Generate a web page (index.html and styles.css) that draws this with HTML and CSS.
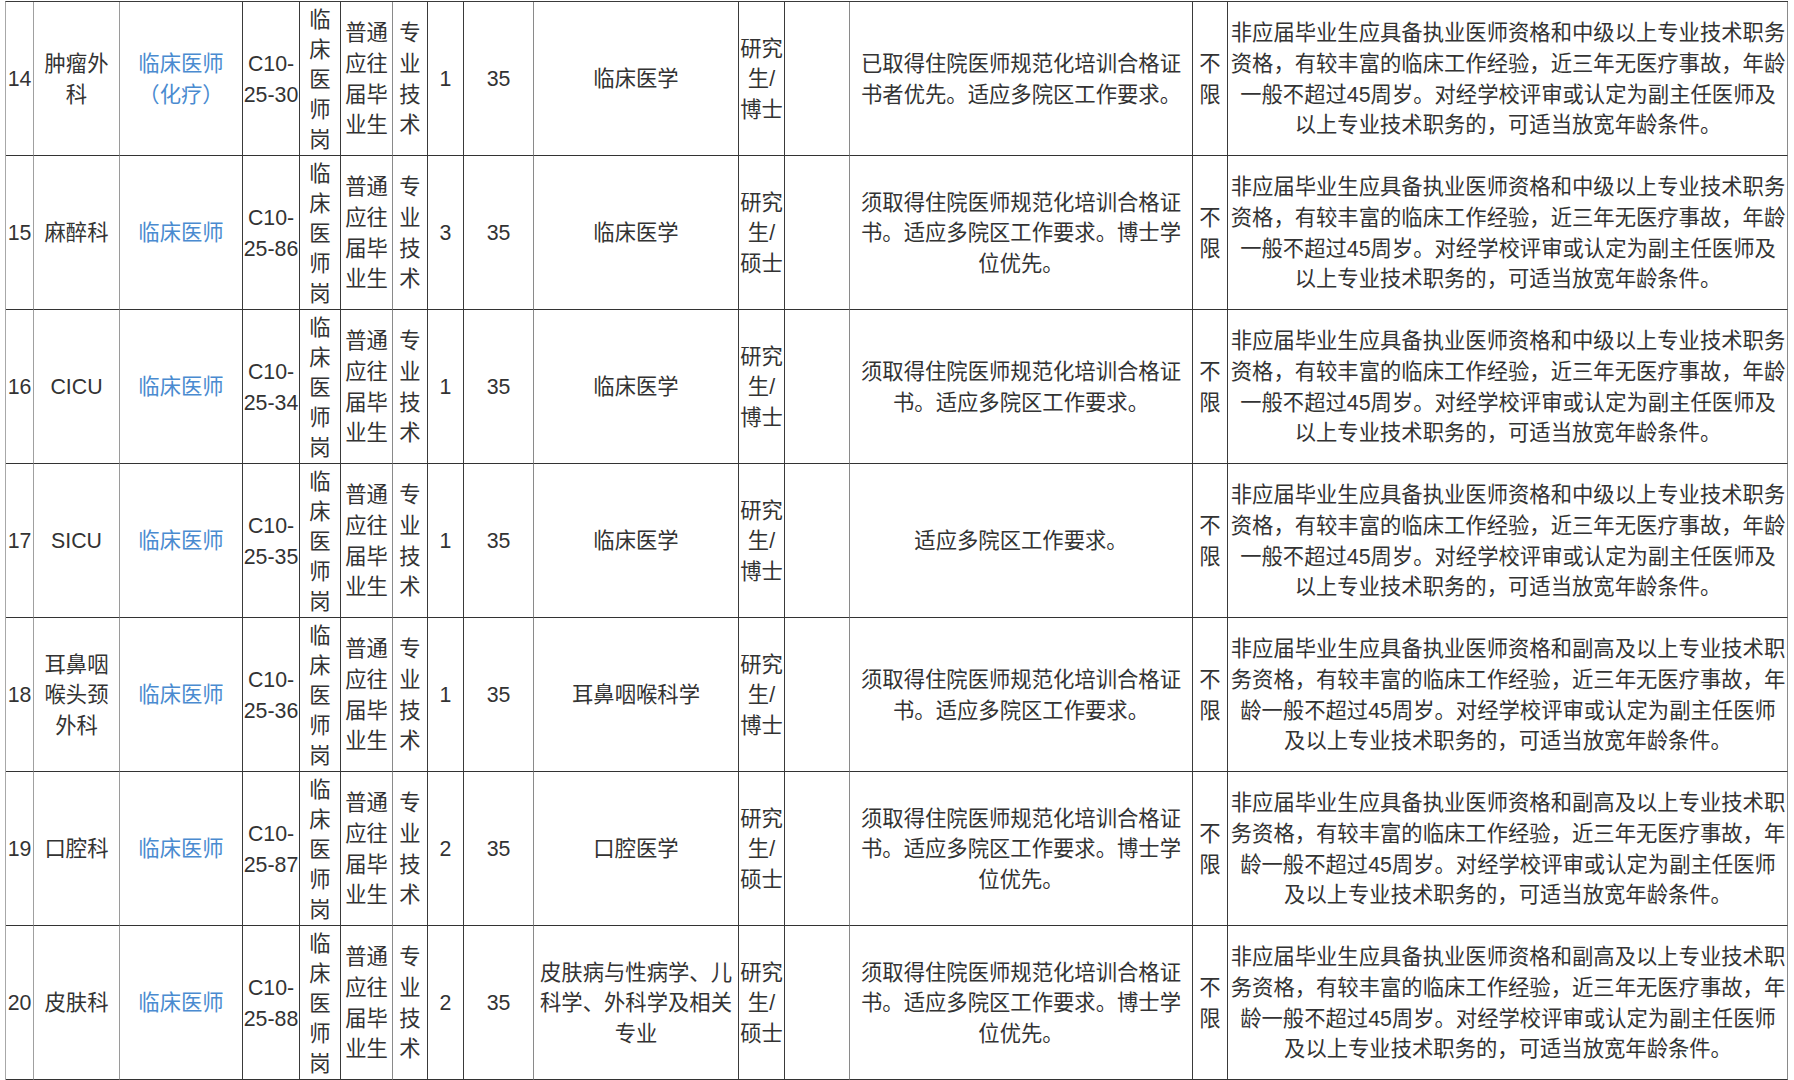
FILE: index.html
```html
<!DOCTYPE html>
<html lang="zh-CN">
<head>
<meta charset="utf-8">
<title>岗位表</title>
<link rel="stylesheet" href="styles.css">
</head>
<body>
<table class="jobs">
  <colgroup>
    <col class="c-idx"><col class="c-dept"><col class="c-post"><col class="c-code"><col class="c-type">
    <col class="c-src"><col class="c-cat"><col class="c-num"><col class="c-age"><col class="c-major">
    <col class="c-edu"><col class="c-deg"><col class="c-other"><col class="c-hk"><col class="c-exp">
  </colgroup>
  <tbody>
    <tr>
      <td>14</td><td>肿瘤外科</td><td class="link">临床医师（化疗）</td><td>C10-<br>25-30</td><td>临床医师岗</td>
      <td>普通应往届毕业生</td><td>专业技术</td><td>1</td><td>35</td><td>临床医学</td>
      <td>研究生/博士</td><td></td><td>已取得住院医师规范化培训合格证书者优先。适应多院区工作要求。</td><td>不限</td>
      <td>非应届毕业生应具备执业医师资格和中级以上专业技术职务资格，有较丰富的临床工作经验，近三年无医疗事故，年龄一般不超过45周岁。对经学校评审或认定为副主任医师及以上专业技术职务的，可适当放宽年龄条件。</td>
    </tr>
    <tr>
      <td>15</td><td>麻醉科</td><td class="link">临床医师</td><td>C10-<br>25-86</td><td>临床医师岗</td>
      <td>普通应往届毕业生</td><td>专业技术</td><td>3</td><td>35</td><td>临床医学</td>
      <td>研究生/硕士</td><td></td><td>须取得住院医师规范化培训合格证书。适应多院区工作要求。博士学位优先。</td><td>不限</td>
      <td>非应届毕业生应具备执业医师资格和中级以上专业技术职务资格，有较丰富的临床工作经验，近三年无医疗事故，年龄一般不超过45周岁。对经学校评审或认定为副主任医师及以上专业技术职务的，可适当放宽年龄条件。</td>
    </tr>
    <tr>
      <td>16</td><td>CICU</td><td class="link">临床医师</td><td>C10-<br>25-34</td><td>临床医师岗</td>
      <td>普通应往届毕业生</td><td>专业技术</td><td>1</td><td>35</td><td>临床医学</td>
      <td>研究生/博士</td><td></td><td>须取得住院医师规范化培训合格证书。适应多院区工作要求。</td><td>不限</td>
      <td>非应届毕业生应具备执业医师资格和中级以上专业技术职务资格，有较丰富的临床工作经验，近三年无医疗事故，年龄一般不超过45周岁。对经学校评审或认定为副主任医师及以上专业技术职务的，可适当放宽年龄条件。</td>
    </tr>
    <tr>
      <td>17</td><td>SICU</td><td class="link">临床医师</td><td>C10-<br>25-35</td><td>临床医师岗</td>
      <td>普通应往届毕业生</td><td>专业技术</td><td>1</td><td>35</td><td>临床医学</td>
      <td>研究生/博士</td><td></td><td>适应多院区工作要求。</td><td>不限</td>
      <td>非应届毕业生应具备执业医师资格和中级以上专业技术职务资格，有较丰富的临床工作经验，近三年无医疗事故，年龄一般不超过45周岁。对经学校评审或认定为副主任医师及以上专业技术职务的，可适当放宽年龄条件。</td>
    </tr>
    <tr>
      <td>18</td><td>耳鼻咽喉头颈外科</td><td class="link">临床医师</td><td>C10-<br>25-36</td><td>临床医师岗</td>
      <td>普通应往届毕业生</td><td>专业技术</td><td>1</td><td>35</td><td>耳鼻咽喉科学</td>
      <td>研究生/博士</td><td></td><td>须取得住院医师规范化培训合格证书。适应多院区工作要求。</td><td>不限</td>
      <td>非应届毕业生应具备执业医师资格和副高及以上专业技术职务资格，有较丰富的临床工作经验，近三年无医疗事故，年龄一般不超过45周岁。对经学校评审或认定为副主任医师及以上专业技术职务的，可适当放宽年龄条件。</td>
    </tr>
    <tr>
      <td>19</td><td>口腔科</td><td class="link">临床医师</td><td>C10-<br>25-87</td><td>临床医师岗</td>
      <td>普通应往届毕业生</td><td>专业技术</td><td>2</td><td>35</td><td>口腔医学</td>
      <td>研究生/硕士</td><td></td><td>须取得住院医师规范化培训合格证书。适应多院区工作要求。博士学位优先。</td><td>不限</td>
      <td>非应届毕业生应具备执业医师资格和副高及以上专业技术职务资格，有较丰富的临床工作经验，近三年无医疗事故，年龄一般不超过45周岁。对经学校评审或认定为副主任医师及以上专业技术职务的，可适当放宽年龄条件。</td>
    </tr>
    <tr>
      <td>20</td><td>皮肤科</td><td class="link">临床医师</td><td>C10-<br>25-88</td><td>临床医师岗</td>
      <td>普通应往届毕业生</td><td>专业技术</td><td>2</td><td>35</td><td>皮肤病与性病学、儿科学、外科学及相关专业</td>
      <td>研究生/硕士</td><td></td><td>须取得住院医师规范化培训合格证书。适应多院区工作要求。博士学位优先。</td><td>不限</td>
      <td>非应届毕业生应具备执业医师资格和副高及以上专业技术职务资格，有较丰富的临床工作经验，近三年无医疗事故，年龄一般不超过45周岁。对经学校评审或认定为副主任医师及以上专业技术职务的，可适当放宽年龄条件。</td>
    </tr>
  </tbody>
</table>
</body>
</html>
```
FILE: styles.css
```css
html, body {
  margin: 0;
  padding: 0;
  background: #ffffff;
  overflow: hidden;
}

.jobs {
  margin: 1px 0 0 5px;
  width: 1783px;
  table-layout: fixed;
  border-collapse: separate;
  border-spacing: 0;
  border-left: 1px solid #a8a8a8;
  border-top: 1px solid #3a3a3a;
  font-family: "Liberation Sans", "Noto Sans CJK SC", sans-serif;
  font-size: 21.333px;
  line-height: 30.6px;
  color: #333333;
  text-spacing-trim: space-all;
}

.c-idx { width: 28px; }
.c-dept { width: 86px; }
.c-post { width: 123px; }
.c-code { width: 57px; }
.c-type { width: 41px; }
.c-src { width: 52px; }
.c-cat { width: 35px; }
.c-num { width: 36px; }
.c-age { width: 70px; }
.c-major { width: 205px; }
.c-edu { width: 46px; }
.c-deg { width: 65px; }
.c-other { width: 343px; }
.c-hk { width: 35px; }
.c-exp { width: 560px; }

.jobs td {
  box-sizing: border-box;
  height: 154px;
  padding: 2px 0 0;
  text-align: center;
  vertical-align: middle;
  border-right: 1px solid #3a3a3a;
  border-bottom: 1px solid #333333;
  word-break: normal;
}

.jobs td:nth-child(1) { border-right-color: #a0a0a0; }
.jobs td:nth-child(2) { border-right-color: #9a9a9a; padding: 2px 1px 0; }
.jobs td:nth-child(3) { padding: 2px 2px 0; }
.jobs td:nth-child(5) { padding-top: 3px; line-height: 30px; }
.jobs td:nth-child(6) { border-right-color: #8a8a8a; }
.jobs td:nth-child(9) { border-right-color: #8a8a8a; }
.jobs td:nth-child(10) { padding: 2px 3px 0; }
.jobs td:nth-child(12) { border-right-color: #8a8a8a; }
.jobs td:nth-child(13) { padding: 2px 10px 0; }
.jobs td:nth-child(15) { padding: 2px 1px 0 2px; border-right-color: #8a8a8a; }

.jobs td.link {
  color: #4a8bd0;
}
```
